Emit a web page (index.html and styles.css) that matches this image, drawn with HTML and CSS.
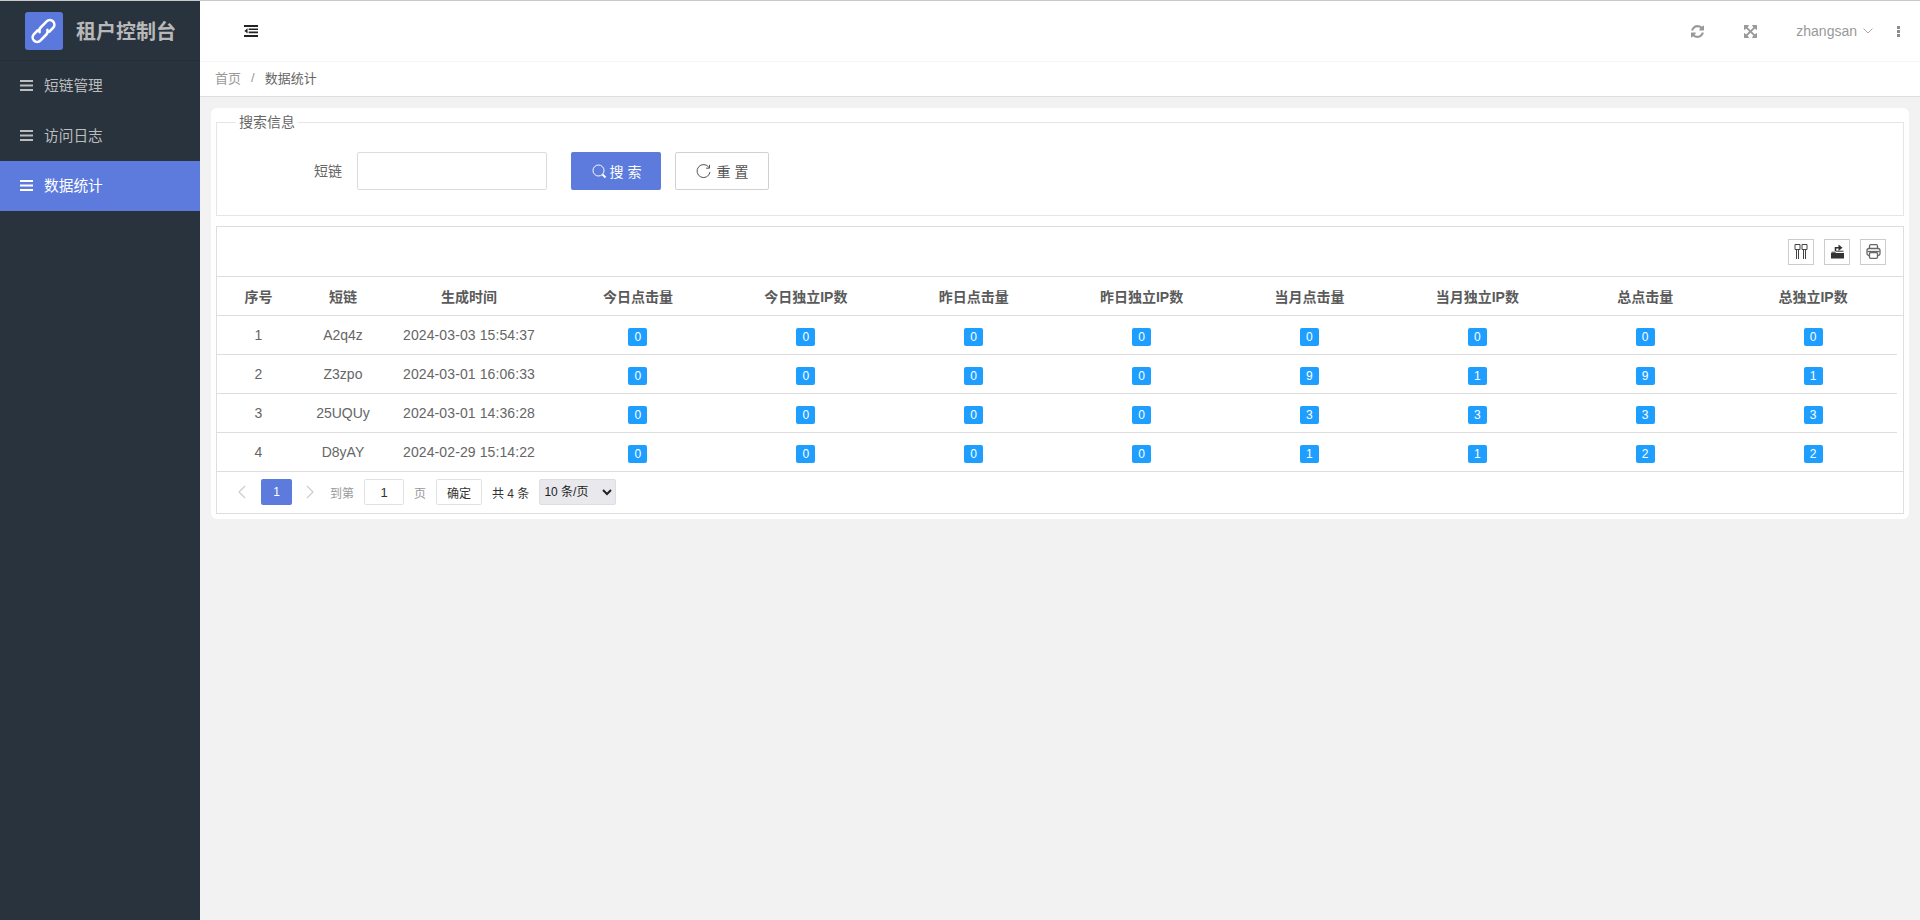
FILE: index.html
```html
<!DOCTYPE html>
<html lang="zh-CN">
<head>
<meta charset="utf-8">
<title>数据统计</title>
<link rel="stylesheet" href="styles.css">
</head>
<body>
<div class="app">
  <aside class="sidebar">
    <div class="brand">
      <span class="brand-logo">
        <svg width="38" height="38" viewBox="0 0 38 38"><g transform="rotate(-45 18.5 19)" fill="none" stroke="#fff" stroke-width="2.600" stroke-linecap="round"><path d="M15 14.500H9.500a4.500 4.500 0 0 0 0 9H18a4.500 4.500 0 0 0 4-2.500"/><path d="M22 23.500h5.500a4.500 4.500 0 0 0 0-9H19a4.500 4.500 0 0 0-4 2.500"/></g></svg>
      </span>
      <span class="brand-name">租户控制台</span>
    </div>
    <nav class="menu">
      <a class="menu-item"><svg class="menu-icon" viewBox="0 0 13 11"><path d="M0 0h13v2H0zM0 4.500h13v2H0zM0 9h13v2H0z"/></svg><span class="menu-text">短链管理</span></a>
      <a class="menu-item"><svg class="menu-icon" viewBox="0 0 13 11"><path d="M0 0h13v2H0zM0 4.500h13v2H0zM0 9h13v2H0z"/></svg><span class="menu-text">访问日志</span></a>
      <a class="menu-item active"><svg class="menu-icon" viewBox="0 0 13 11"><path d="M0 0h13v2H0zM0 4.500h13v2H0zM0 9h13v2H0z"/></svg><span class="menu-text">数据统计</span></a>
    </nav>
  </aside>
  <div class="content">
    <header class="topbar">
      <svg class="shrink-icon" width="14" height="12" viewBox="0 0 15 12" preserveAspectRatio="none"><path d="M0 0h15v2H0zM5 3.400h10v1.600H5zM5 6.600h10v1.600H5zM0 10h15v2H0zM3.800 3.200v5.400L0.400 5.900z" fill="#222"/></svg>
      <div class="top-right">
        <svg class="top-icon" viewBox="0 0 1536 1536"><path d="M1511 928q0 5-1 7-64 268-268 434.500t-478 166.500q-146 0-282.500-55t-243.500-157l-129 129q-19 19-45 19t-45-19-19-45v-448q0-26 19-45t45-19h448q26 0 45 19t19 45-19 45l-137 137q71 66 161 102t187 36q134 0 250-65t186-179q11-17 53-117 8-23 30-23h192q13 0 22.500 9.500t9.500 22.500zm25-800v448q0 26-19 45t-45 19h-448q-26 0-45-19t-19-45 19-45l138-138q-148-137-349-137-134 0-250 65t-186 179q-11 17-53 117-8 23-30 23h-199q-13 0-22.500-9.500t-9.500-22.500v-7q65-268 270-434.500t480-166.500q146 0 284 55.500t245 156.500l130-129q19-19 45-19t45 19 19 45z"/></svg>
        <svg class="top-icon expand" viewBox="0 0 1536 1536"><path d="M1283 413l-355 355 355 355 144-144q29-31 70-14 39 17 39 59v448q0 26-19 45t-45 19h-448q-42 0-59-40-17-39 14-69l144-144-355-355-355 355 144 144q31 30 14 69-17 40-59 40h-448q-26 0-45-19t-19-45v-448q0-42 40-59 39-17 69 14l144 144 355-355-355-355-144 144q-19 19-45 19-12 0-24-5-40-17-40-59v-448q0-26 19-45t45-19h448q42 0 59 40 17 39-14 69l-144 144 355 355 355-355-144-144q-31-30-14-69 17-40 59-40h448q26 0 45 19t19 45v448q0 42-39 59-13 5-25 5-26 0-45-19z"/></svg>
        <span class="user">zhangsan</span>
        <svg class="user-caret" width="10" height="6" viewBox="0 0 10 6"><path d="M.5.500 5 5 9.500.500" fill="none" stroke="#aaa"/></svg>
        <svg class="dots" width="3" height="11" viewBox="0 0 3 11"><path d="M0 0h3v3H0zM0 4h3v3H0zM0 8h3v3H0z" fill="#8c8c8c"/></svg>
      </div>
    </header>
    <div class="crumbs">
      <span class="crumb-link">首页</span><span class="crumb-sep">/</span><span class="crumb-now">数据统计</span>
    </div>
    <main class="main">
      <section class="card">
        <fieldset class="search">
          <legend class="search-title">搜索信息</legend>
          <form class="search-row">
            <label class="search-label">短链</label>
            <input class="search-input" type="text">
            <button class="btn btn-primary" type="button">
              <svg width="15" height="15" viewBox="0 0 15 15" fill="none" stroke="#fff"><circle cx="6.500" cy="6.500" r="5.500"/><path d="m10.500 10.500 3 3" stroke-width="2"/></svg><span>搜 索</span>
            </button>
            <button class="btn btn-plain" type="button">
              <svg width="15" height="15" viewBox="0 0 15 15" fill="none" stroke="#555"><path d="M13 3.500A6.500 6.500 0 1 0 14 8"/><path d="M13.500.800v3.400h-3.400"/></svg><span>重 置</span>
            </button>
          </form>
        </fieldset>
        <div class="grid">
          <div class="grid-tools">
            <span class="tool"><svg width="14" height="15" viewBox="0 0 14 15" fill="none" stroke="#444"><path d="M1 .500h5v5H1zM8 .500h5v5H8zM2.500 5.500V15M4.500 5.500V15M9.500 5.500V15M11.500 5.500V15"/></svg></span>
            <span class="tool"><svg width="15" height="15" viewBox="0 0 15 15"><path d="M1 9h13v5.500H1z" fill="#333"/><path d="M1.500 8.200h4l1-1h7" fill="none" stroke="#333"/><path d="M5.500 7V3.800h3.500" fill="none" stroke="#333" stroke-width="1.600"/><path d="M8.500.500 12.500 3.800 8.500 7z" fill="#333"/></svg></span>
            <span class="tool"><svg width="15" height="15" viewBox="0 0 15 15" fill="none" stroke="#666" stroke-width="1.300"><path d="M3.500 4.500V2a1.300 1.300 0 0 1 1.300-1.300h5.400A1.300 1.300 0 0 1 11.500 2v2.500"/><rect x="1" y="4.500" width="13" height="7" rx="2"/><rect x="3.500" y="8.500" width="8" height="5.800" rx="1.200" fill="#fff"/><path d="M1.500 7.500h12"/></svg></span>
          </div>
          <div class="grid-head">
            <table class="grid-table">
              <thead>
                <tr>
                  <th class="col-no">序号</th><th class="col-short">短链</th><th class="col-time">生成时间</th>
                  <th>今日点击量</th><th>今日独立IP数</th><th>昨日点击量</th><th>昨日独立IP数</th>
                  <th>当月点击量</th><th>当月独立IP数</th><th>总点击量</th><th>总独立IP数</th>
                </tr>
              </thead>
            </table>
          </div>
          <table class="grid-table">
            <tbody>
              <tr>
                <td class="col-no">1</td><td class="col-short">A2q4z</td><td class="col-time">2024-03-03 15:54:37</td>
                <td><span class="tag">0</span></td><td><span class="tag">0</span></td><td><span class="tag">0</span></td><td><span class="tag">0</span></td>
                <td><span class="tag">0</span></td><td><span class="tag">0</span></td><td><span class="tag">0</span></td><td><span class="tag">0</span></td>
              </tr>
              <tr>
                <td class="col-no">2</td><td class="col-short">Z3zpo</td><td class="col-time">2024-03-01 16:06:33</td>
                <td><span class="tag">0</span></td><td><span class="tag">0</span></td><td><span class="tag">0</span></td><td><span class="tag">0</span></td>
                <td><span class="tag">9</span></td><td><span class="tag">1</span></td><td><span class="tag">9</span></td><td><span class="tag">1</span></td>
              </tr>
              <tr>
                <td class="col-no">3</td><td class="col-short">25UQUy</td><td class="col-time">2024-03-01 14:36:28</td>
                <td><span class="tag">0</span></td><td><span class="tag">0</span></td><td><span class="tag">0</span></td><td><span class="tag">0</span></td>
                <td><span class="tag">3</span></td><td><span class="tag">3</span></td><td><span class="tag">3</span></td><td><span class="tag">3</span></td>
              </tr>
              <tr class="last">
                <td class="col-no">4</td><td class="col-short">D8yAY</td><td class="col-time">2024-02-29 15:14:22</td>
                <td><span class="tag">0</span></td><td><span class="tag">0</span></td><td><span class="tag">0</span></td><td><span class="tag">0</span></td>
                <td><span class="tag">1</span></td><td><span class="tag">1</span></td><td><span class="tag">2</span></td><td><span class="tag">2</span></td>
              </tr>
            </tbody>
          </table>
          <div class="pager">
            <svg class="pager-arrow" width="8" height="14" viewBox="0 0 8 14"><path d="M7 1 1 7l6 6" fill="none" stroke="#ccc" stroke-width="1.200"/></svg>
            <span class="page-current">1</span>
            <svg class="pager-arrow next" width="8" height="14" viewBox="0 0 8 14"><path d="m1 1 6 6-6 6" fill="none" stroke="#ccc" stroke-width="1.200"/></svg>
            <span class="pager-muted to">到第</span>
            <input class="page-input" type="text" value="1">
            <span class="pager-muted unit">页</span>
            <button class="page-go" type="button">确定</button>
            <span class="pager-total">共 4 条</span>
            <select class="page-size"><option>10 条/页</option></select>
          </div>
        </div>
      </section>
    </main>
  </div>
</div>
</body>
</html>
```
FILE: styles.css
```css
* { box-sizing: border-box; }
html, body { margin: 0; height: 100%; overflow: hidden; }
body {
  font-family: "Liberation Sans", "Noto Sans CJK SC", sans-serif;
  font-size: 14px;
  color: #666;
  background: #f2f2f2;
}
.app {
  display: flex;
  height: 920px;
  overflow: hidden;
  border-top: 1px solid #c9c9c9;
}
.sidebar { width: 200px; flex: none; background: #28333e; }
.brand {
  height: 60px;
  display: flex;
  align-items: center;
  padding-left: 25px;
  border-bottom: 1px solid #252f39;
}
.brand-logo {
  width: 38px;
  height: 38px;
  border-radius: 3px;
  background: #5b79dc;
  display: block;
}
.brand-logo svg { display: block; }
.brand-name {
  margin-left: 13px;
  font-size: 20px;
  font-weight: 700;
  color: #b8b8b8;
}
.menu-item {
  height: 50px;
  display: flex;
  align-items: center;
  padding: 0 0 2px 20px;
  font-size: 14.700px;
  color: #bdbdbd;
}
.menu-text { margin-bottom: 2px; }
.menu-icon { width: 13px; height: 11px; margin-right: 11px; fill: currentColor; }
.menu-item.active { background: #5c7bdd; color: #fff; }

.content { flex: 1; min-width: 0; display: flex; flex-direction: column; background: #f2f2f2; }
.topbar {
  height: 61px;
  flex: none;
  background: #fff;
  border-bottom: 1px solid #f6f6f6;
  display: flex;
  align-items: center;
  justify-content: space-between;
  padding-left: 44px;
}
.top-right { display: flex; align-items: center; padding-right: 20px; }
.top-icon { width: 13px; height: 13px; fill: #999; }
.expand { margin-left: 40px; }
.user { margin-left: 39px; color: #999; }
.user-caret { margin-left: 6px; }
.dots { margin-left: 24px; }
.crumbs {
  height: 35px;
  flex: none;
  background: #fff;
  border-bottom: 1px solid #dedede;
  display: flex;
  align-items: center;
  padding: 0 0 4px 15px;
  font-size: 13px;
}
.crumb-link { color: #999; }
.crumb-sep { margin: 0 10px; color: #999; }
.crumb-now { color: #666; }
.main { padding: 11px 11px; }
.card {
  background: #fff;
  border-radius: 6px;
  padding: 4px 5px 5px;
}
.search {
  margin: 0;
  padding: 20px 0 25px;
  min-width: 0;
  border: 1px solid #e6e6e6;
}
.search-title {
  margin-left: 19px;
  padding: 0 3px;
  line-height: 20px;
  color: #666;
}
.search-row { display: flex; align-items: center; margin: 0; }
.search-label { width: 125px; text-align: right; padding-bottom: 2px; }
.search-input {
  width: 190px;
  height: 38px;
  margin-left: 15px;
  border: 1px solid #dcdcdc;
  border-radius: 2px;
  background: #fff;
}
.btn {
  height: 38px;
  border-radius: 2px;
  font: inherit;
  display: flex;
  align-items: center;
  justify-content: center;
  padding: 0;
}
.btn-primary { width: 90px; margin-left: 24px; background: #5c7bdd; border: 0; color: #fff; padding-left: 1px; }
.btn-primary span { margin-left: 3px; }
.btn-plain { width: 94px; margin-left: 14px; background: #fff; border: 1px solid #d2d2d2; color: #555; }
.btn-plain span { margin-left: 6px; }

.grid { margin-top: 10px; border: 1px solid #dedede; }
.grid-tools {
  height: 50px;
  border-bottom: 1px solid #dedede;
  display: flex;
  align-items: center;
  justify-content: flex-end;
  gap: 10px;
  padding-right: 17px;
}
.tool {
  width: 26px;
  height: 26px;
  border: 1px solid #ccc;
  display: flex;
  align-items: center;
  justify-content: center;
}
.grid-head { border-bottom: 1px solid #dedede; }
.grid-table {
  width: 1680px;
  table-layout: fixed;
  border-collapse: separate;
  border-spacing: 0;
}
.grid-table th, .grid-table td {
  padding: 0;
  text-align: center;
  vertical-align: middle;
}
.grid-table th { height: 38px; font-weight: 700; color: #5a5a5a; }
.grid-table td { height: 39px; border-bottom: 1px solid #dedede; }
.grid-table .last td { height: 38px; border-bottom: 0; }
.col-no { width: 83px; }
.col-short { width: 86px; }
.col-time { width: 168px; }
.grid-table th.col-time, .grid-table td.col-time { padding-right: 2px; }
.grid-table td.col-time { letter-spacing: 0.1px; }
.tag {
  display: block;
  width: 19px;
  height: 18px;
  line-height: 18px;
  margin: 4px auto 0;
  border-radius: 2px;
  background: #1e9fff;
  color: #fff;
  font-size: 12px;
}
.pager {
  height: 42px;
  border-top: 1px solid #dedede;
  display: flex;
  align-items: center;
  padding: 0 0 1px 21px;
  font-size: 12px;
}
.pager-arrow { flex: none; }
.page-current {
  width: 31px;
  height: 26px;
  margin-left: 15px;
  border-radius: 2px;
  background: #5c7bdd;
  color: #fff;
  text-align: center;
  line-height: 26px;
}
.next { margin-left: 14px; }
.pager-muted { color: #999; }
.to { margin-left: 16px; }
.page-input {
  width: 40px;
  height: 26px;
  margin-left: 10px;
  border: 1px solid #e2e2e2;
  border-radius: 2px;
  text-align: center;
  font: inherit;
  font-size: 13px;
  color: #333;
  padding: 0;
}
.unit { margin-left: 10px; }
.page-go {
  width: 46px;
  height: 26px;
  margin-left: 10px;
  padding: 0;
  border: 1px solid #e2e2e2;
  border-radius: 2px;
  background: #fff;
  color: #333;
  font: inherit;
}
.pager-total { margin-left: 10px; color: #333; }
.page-size {
  width: 77px;
  height: 26px;
  margin-left: 10px;
  padding: 0;
  font: inherit;
  color: #222;
  background-color: #e9e9ed;
  border: 1px solid #dedede;
  border-radius: 2px;
}
```
